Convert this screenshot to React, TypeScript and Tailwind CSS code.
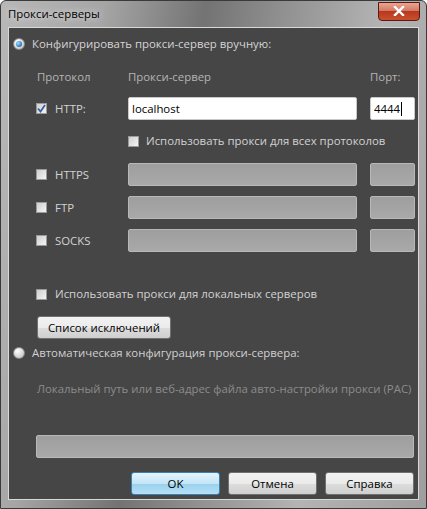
import React from "react";

const font = { fontFamily: '"Open Sans", "Noto Sans", sans-serif' };

function Radio({ checked }: { checked?: boolean }) {
  return (
    <span className="flex h-[12px] w-[12px] shrink-0 items-center justify-center rounded-full border border-[#8a8a8a] bg-[radial-gradient(circle_at_35%_30%,#ffffff,#d6d6d6_60%,#b8b8b8)]">
      {checked && (
        <span className="h-[6px] w-[6px] rounded-full bg-[radial-gradient(circle_at_35%_35%,#9be3ff,#2a74b8_70%,#164c80)]" />
      )}
    </span>
  );
}

function Check({ checked }: { checked?: boolean }) {
  return (
    <span className="flex h-[11px] w-[11px] shrink-0 items-center justify-center border border-[#9a9a9a] bg-[linear-gradient(135deg,#cfcfcf,#f4f4f4)]">
      {checked && (
        <svg width="9" height="9" viewBox="0 0 9 9">
          <path d="M1 4.5 L3.5 7.5 L8 1" fill="none" stroke="#3b5fa0" strokeWidth="1.8" />
        </svg>
      )}
    </span>
  );
}

function Field({ w, value, enabled, cursor }: { w: string; value?: string; enabled?: boolean; cursor?: boolean }) {
  if (enabled) {
    return (
      <div className={`${w} flex h-[23px] items-center rounded-[2px] border border-[#c9c9c9] bg-white px-[3px] text-[11.4px] text-black`}>
        {value}
        {cursor && <span className="ml-[1px] h-[14px] w-[1px] bg-black" />}
      </div>
    );
  }
  return (
    <div className={`${w} h-[23px] rounded-[2px] border border-[#b8b8b8] bg-[linear-gradient(#9e9e9e,#a9a9a9)]`} />
  );
}

function Btn({ label, w, primary }: { label: string; w: string; primary?: boolean }) {
  return (
    <div
      className={`${w} flex h-[23px] items-center justify-center rounded-[3px] border text-[11.4px] text-black ${
        primary
          ? "border-[#3c7fb1] bg-[linear-gradient(#e5f4fc_0%,#c4e5f6_50%,#98d1ef_51%,#b6e0f5_100%)]"
          : "border-[#707070] bg-[linear-gradient(#f2f2f2_0%,#ebebeb_50%,#dddddd_51%,#cfcfcf_100%)]"
      }`}
    >
      {label}
    </div>
  );
}

function ProtoRow({ label, checked, value, port, enabled }: { label: string; checked?: boolean; value?: string; port?: string; enabled?: boolean }) {
  return (
    <div className="flex h-[23px] items-center">
      <div className="flex w-[119px] items-center pl-[27px]">
        <Check checked={checked} />
        <span className="ml-[8px] text-[#d2d2d2]">{label}</span>
      </div>
      <Field w="w-[229px]" value={value} enabled={enabled} />
      <div className="w-[13px]" />
      <Field w="w-[45px]" value={port} enabled={enabled} cursor={enabled} />
    </div>
  );
}

export default function App() {
  return (
    <div
      className="flex h-[509px] w-[427px] flex-col overflow-hidden whitespace-nowrap rounded-t-[6px] border border-[#3a3a3a] bg-[linear-gradient(100deg,#b8b8b8_0%,#a6a6a6_20%,#737373_40%,#909090_55%,#b4b4b4_75%,#9e9e9e_100%)] text-[11.4px] leading-[16px]"
      style={font}
    >
      {/* title bar */}
      <div className="flex h-[26px] shrink-0 items-center justify-between pl-[7px] pr-[6px]">
        <span className="text-[11.4px] text-black [text-shadow:0_0_6px_rgba(255,255,255,0.9)]">Прокси-серверы</span>
        <div className="-mt-[6px] flex h-[19px] w-[42px] items-center justify-center rounded-b-[4px] border border-[#5a1a10] bg-[linear-gradient(#e8a592_0%,#d47a64_45%,#b8381f_50%,#c9502f_100%)]">
          <svg width="12" height="10" viewBox="0 0 12 10">
            <path d="M2 1 L10 9 M10 1 L2 9" stroke="#fff" strokeWidth="2.4" strokeLinecap="square" />
          </svg>
        </div>
      </div>

      {/* client area */}
      <div className="mx-[7px] flex flex-1 flex-col border border-[#d8d8d8] bg-[#464646] pt-[8px]">
        <div className="flex h-[16px] items-center pl-[4px]">
          <Radio checked />
          <span className="ml-[7px] text-[#d4d4d4]">Конфигурировать прокси-сервер вручную:</span>
        </div>

        <div className="mt-[17px] flex h-[16px] items-center text-[#b4b4b4]">
          <span className="w-[119px] pl-[28px]">Протокол</span>
          <span className="w-[242px]">Прокси-сервер</span>
          <span>Порт:</span>
        </div>

        <div className="mt-[12px]">
          <ProtoRow label="HTTP:" checked enabled value="localhost" port="4444" />
        </div>

        <div className="mt-[13px] flex h-[16px] items-center pl-[119px]">
          <Check />
          <span className="ml-[7px] text-[#d2d2d2]">Использовать прокси для всех протоколов</span>
        </div>

        <div className="mt-[14px] flex flex-col gap-[10px]">
          <ProtoRow label="HTTPS" />
          <ProtoRow label="FTP" />
          <ProtoRow label="SOCKS" />
        </div>

        <div className="mt-[34px] flex h-[16px] items-center pl-[27px]">
          <Check />
          <span className="ml-[8px] text-[#d2d2d2]">Использовать прокси для локальных серверов</span>
        </div>

        <div className="mt-[14px] pl-[28px]">
          <Btn label="Список исключений" w="w-[134px]" />
        </div>

        <div className="mt-[6px] flex h-[16px] items-center pl-[4px]">
          <Radio />
          <span className="ml-[7px] text-[#d0d0d0]">Автоматическая конфигурация прокси-сервера:</span>
        </div>

        <div className="mt-[20px] h-[16px] pl-[28px] text-[#8c8c8c]">
          Локальный путь или веб-адрес файла авто-настройки прокси (PAC)
        </div>

        <div className="mt-[38px] pl-[27px]">
          <Field w="w-[378px]" />
        </div>

        <div className="mt-[14px] flex justify-end gap-[8px] pr-[4px]">
          <Btn label="OK" w="w-[89px]" primary />
          <Btn label="Отмена" w="w-[89px]" />
          <Btn label="Справка" w="w-[89px]" />
        </div>
      </div>
      <div className="h-[8px] shrink-0" />
    </div>
  );
}
